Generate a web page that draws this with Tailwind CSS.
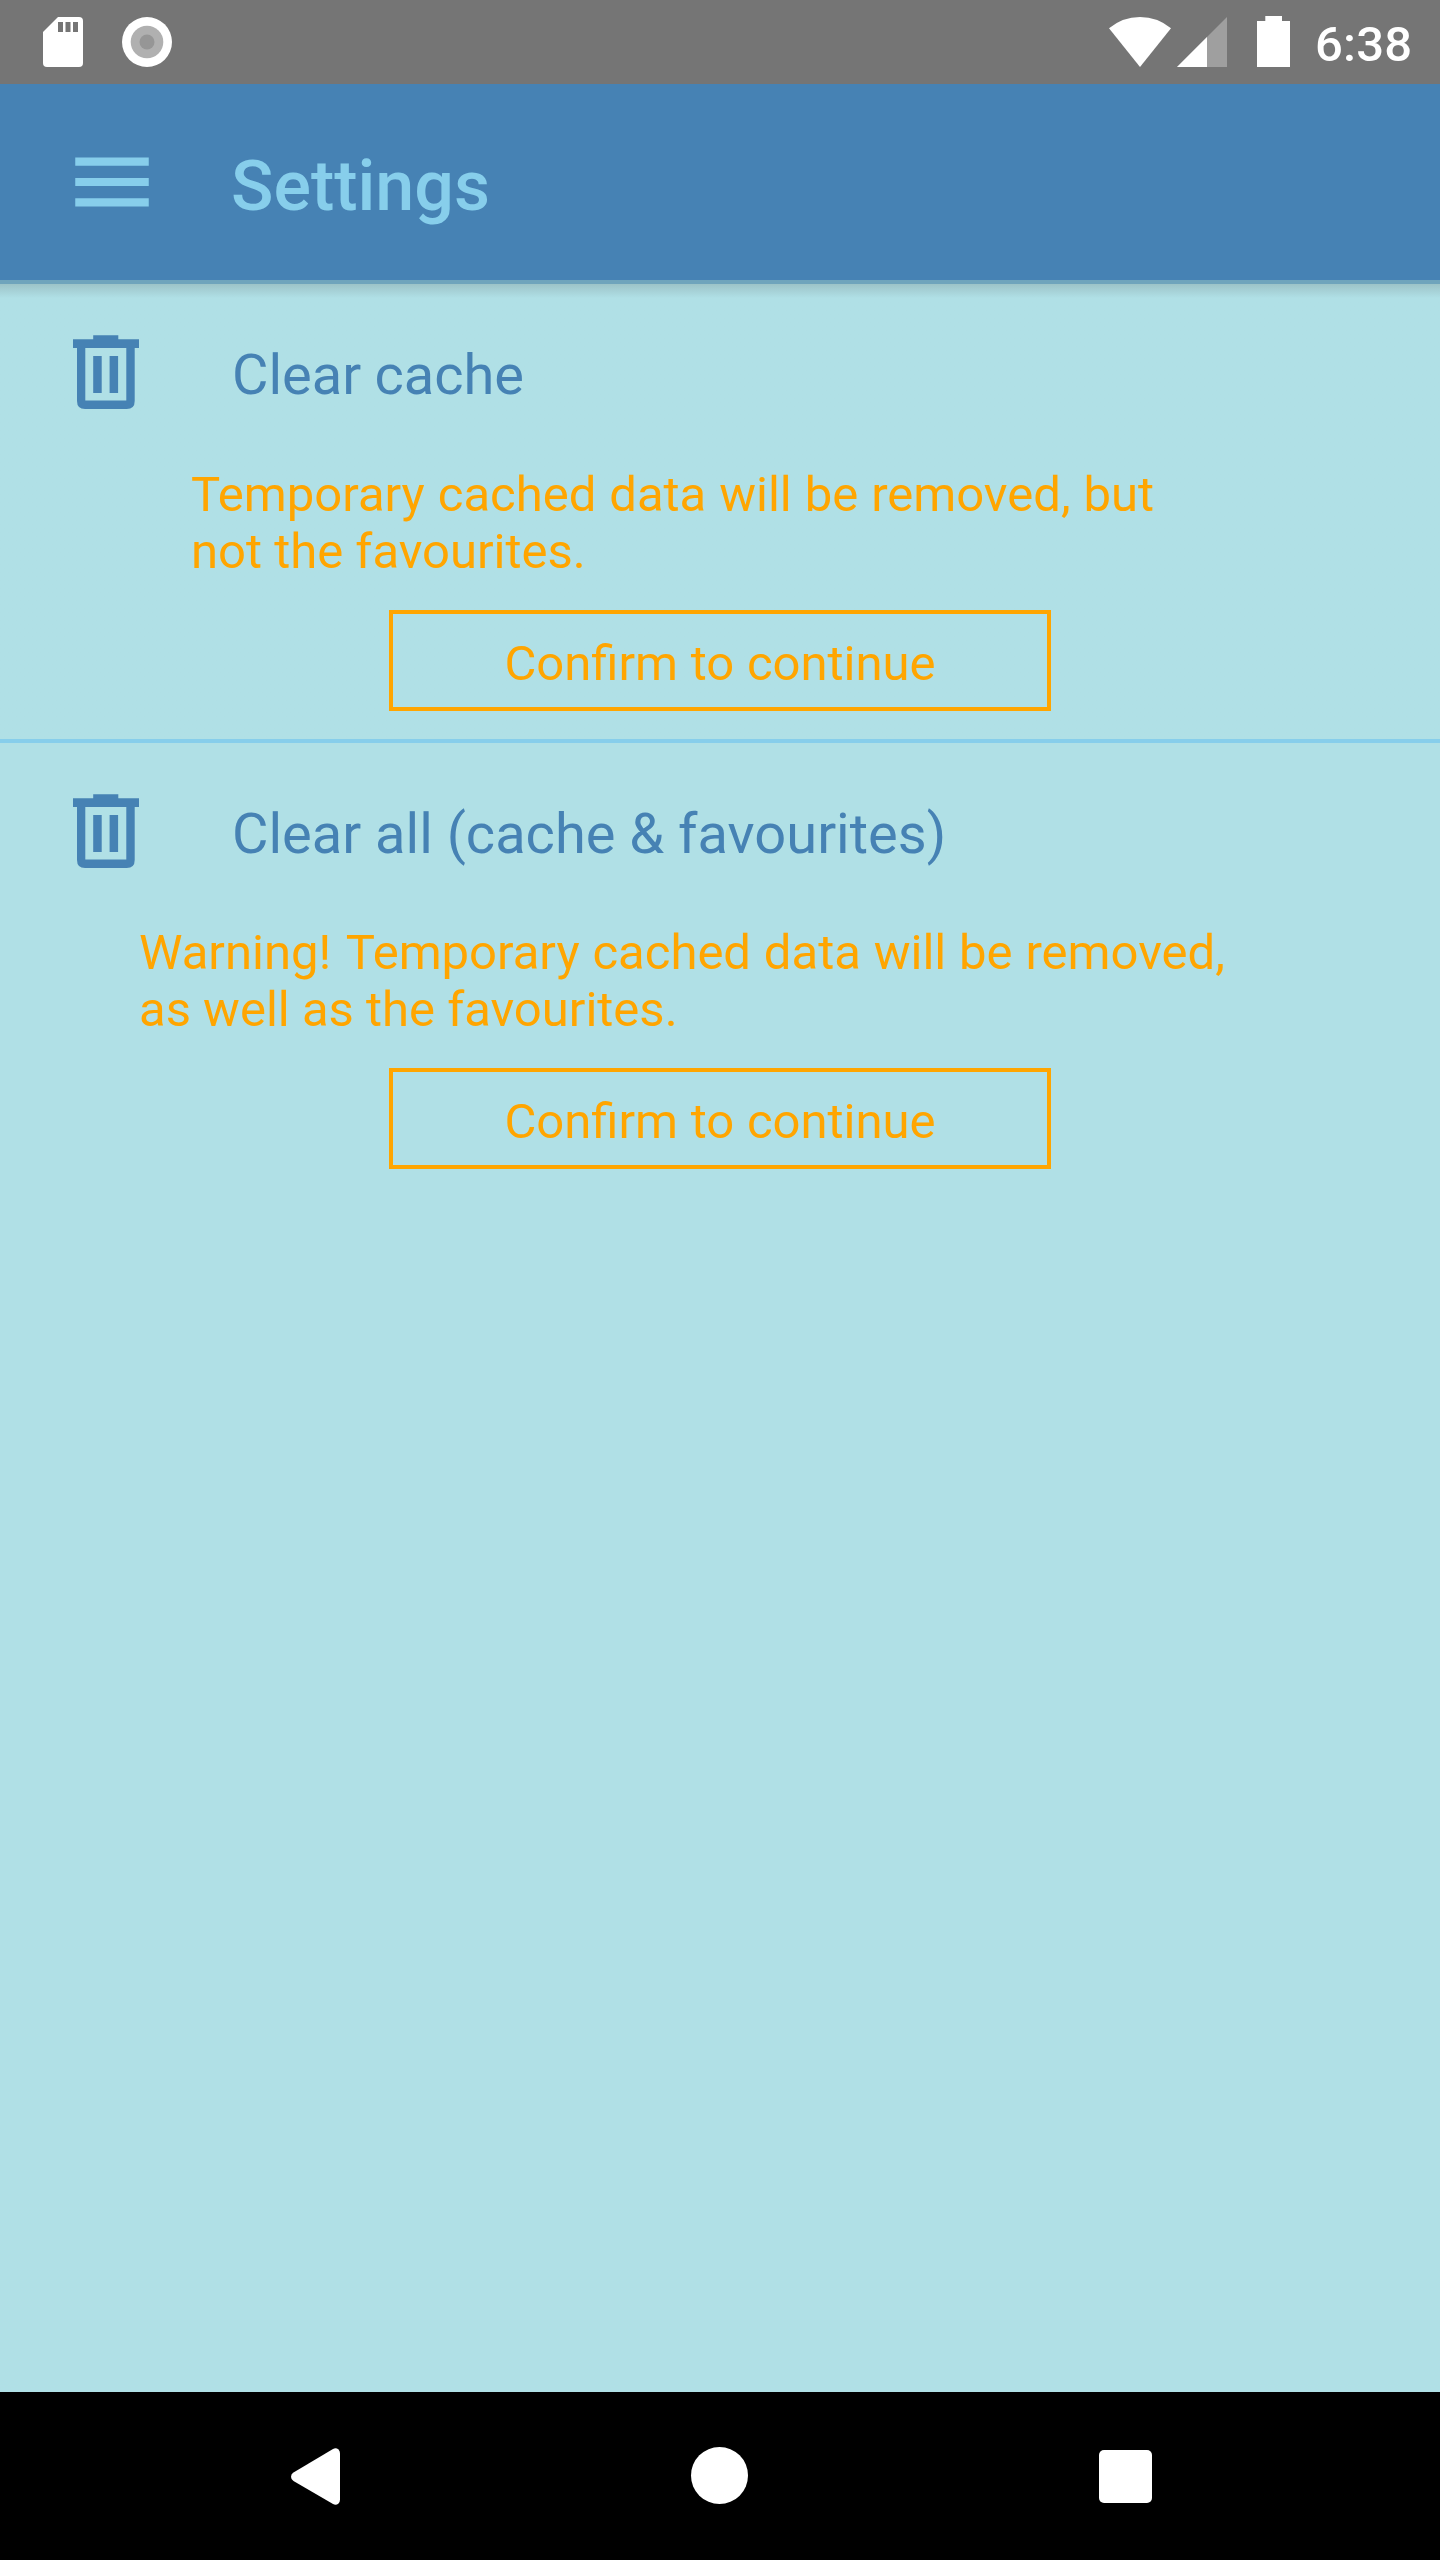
<!DOCTYPE html>
<html lang="en">
<head>
<meta charset="utf-8">
<title>Settings</title>
<script src="https://cdn.jsdelivr.net/npm/@tailwindcss/browser@4"></script>
</head>
<body class="bg-[#b0e0e6] font-['Roboto',sans-serif]">
<div class="flex h-[2560px] w-[1440px] flex-col overflow-hidden">
  <!-- Status bar -->
  <div class="flex h-[84px] shrink-0 items-start justify-between bg-[#757575] text-white">
    <div class="flex gap-[39px] pt-[17px] pl-[43px]">
      <svg class="h-[50px] w-10" viewBox="0 0 40 50"><path fill="#fff" d="M15 0H36Q40 0 40 4V46Q40 50 36 50H4Q0 50 0 46V15Z"/><path fill="#757575" d="M15 5h5v10h-5zM22.500 5h5v10h-5zM30 5h5v10h-5z"/></svg>
      <svg class="size-[50px]" viewBox="0 0 50 50"><circle cx="25" cy="25" r="25" fill="#fff"/><circle cx="25" cy="25" r="16.300" fill="#b0b0b0"/><circle cx="25" cy="25" r="7.500" fill="#969696"/></svg>
    </div>
    <div class="flex w-[331px] items-start">
      <svg class="mt-[17px] h-[50px] w-[62px]" viewBox="0 0 62 50"><path fill="#fff" d="M31 50L0 11.300Q13.500 0 31 0T62 11.300Z"/></svg>
      <svg class="mt-[17px] ml-[6px] size-[50px]" viewBox="0 0 50 50"><path fill="#9f9f9f" d="M50 0V50H0Z"/><path fill="#fff" d="M30 20V50H0Z"/></svg>
      <svg class="mt-4 ml-[30px] h-[51px] w-[33px]" viewBox="0 0 33 51"><path fill="#fff" d="M8.300 0H25V5H33V51H0V5H8.300Z"/></svg>
      <span class="mt-4 ml-[25px] text-[49px] leading-[57px] font-medium tracking-[0.2px]">6:38</span>
    </div>
  </div>

  <!-- App bar -->
  <header class="flex h-[196px] shrink-0 items-start bg-[#4682b4] text-[#87ceeb]">
    <svg class="mt-[49px] ml-[62.75px] size-[98px]" viewBox="0 0 512 512" fill="currentColor"><path d="M64 384h384v-42.666H64V384zm0-106.666h384v-42.667H64v42.667zM64 128v42.665h384V128H64z"/></svg>
    <h1 class="mt-[61px] ml-[70.250px] text-[70px] leading-[82px] font-medium">Settings</h1>
  </header>
  <div class="h-1 shrink-0 bg-[#6fa4bc]"></div>

  <main class="flex-1">
    <section class="h-[459px] border-b-4 border-[#87ceeb] bg-linear-to-b from-[#9cc3c8] to-[#b0e0e6] to-[14px]">
      <div class="flex items-start text-[#4682b4]">
        <svg class="mt-[51px] ml-[73px] h-[74px] w-[66px]" viewBox="0 0 66 74" fill="currentColor"><path fill-rule="evenodd" d="M20.200 .3H45.300V4.300H66V13H61.700V66Q61.700 74 53.700 74H12Q4 74 4 66V13H0V4.300H20.200ZM12.300 13V65.400H53.300V13Z"/><path d="M20.200 21h8.500v36.900h-8.500zM36.600 21h8.500v36.900h-8.500z"/></svg>
        <h2 class="mt-[58px] ml-[93px] text-[56px] leading-[66px] [word-spacing:-0.7px]">Clear cache</h2>
      </div>
      <p class="mt-[57px] ml-[191px] text-[49px] leading-[57px] text-[#ffa500]"><span class="[word-spacing:0.8px]">Temporary cached data will be removed, but</span><br>not the favourites.</p>
      <button class="mx-auto mt-[30px] flex h-[101px] w-[662px] items-center justify-center border-4 border-[#ffa500] pt-[5px] text-[49px] leading-[57px] text-[#ffa500] [word-spacing:0.5px]">Confirm to continue</button>
    </section>
    <section>
      <div class="flex items-start text-[#4682b4]">
        <svg class="mt-[51px] ml-[73px] h-[74px] w-[66px]" viewBox="0 0 66 74" fill="currentColor"><path fill-rule="evenodd" d="M20.200 .3H45.300V4.300H66V13H61.700V66Q61.700 74 53.700 74H12Q4 74 4 66V13H0V4.300H20.200ZM12.300 13V65.400H53.300V13Z"/><path d="M20.200 21h8.500v36.900h-8.500zM36.600 21h8.500v36.900h-8.500z"/></svg>
        <h2 class="mt-[58px] ml-[93px] text-[56px] leading-[66px]">Clear all (cache &amp; favourites)</h2>
      </div>
      <p class="mt-[56px] ml-[139px] text-[49px] leading-[57px] text-[#ffa500]"><span class="[word-spacing:2.5px]">Warning! </span><span class="[word-spacing:0.7px]">Temporary cached data will be removed,</span><br>as well as the favourites.</p>
      <button class="mx-auto mt-[30px] flex h-[101px] w-[662px] items-center justify-center border-4 border-[#ffa500] pt-[5px] text-[49px] leading-[57px] text-[#ffa500] [word-spacing:0.5px]">Confirm to continue</button>
    </section>
  </main>

  <!-- Navigation bar -->
  <nav class="flex h-[168px] shrink-0 items-start bg-black text-white">
    <svg class="mt-14 ml-[291px] h-[57px] w-[49px]" viewBox="0 0 49 57" fill="currentColor"><path d="M2.500 24.500L42 .9Q45-.8 47.500 1.500Q49 3 49 5.500V51.500Q49 54 47.500 55.500Q45 57.800 42 56.100L2.500 33Q0 31.500 0 28.700Q0 26 2.500 24.500Z"/></svg>
    <div class="mt-[55px] ml-[351px] size-[57px] rounded-full bg-white"></div>
    <div class="mt-[58px] ml-[351px] size-[53px] rounded-[5px] bg-white"></div>
  </nav>
</div>
</body>
</html>
